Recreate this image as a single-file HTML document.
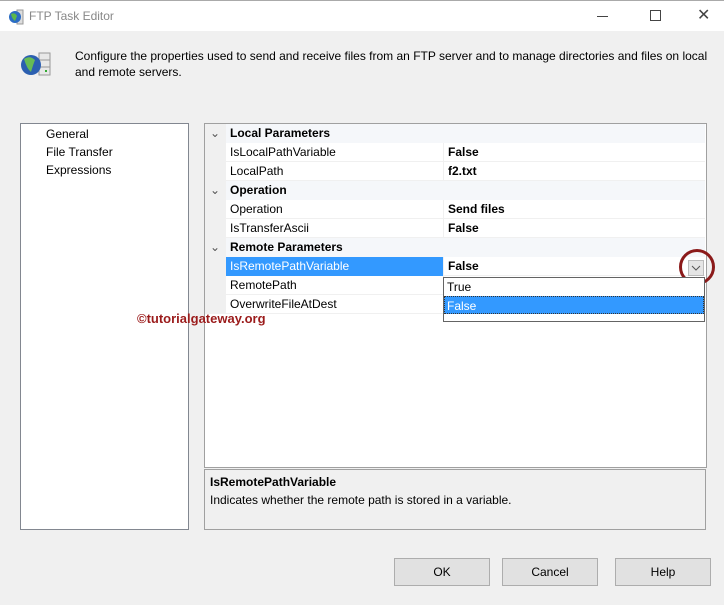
<!DOCTYPE html>
<html><head><meta charset="utf-8"><style>
*{box-sizing:border-box;margin:0;padding:0}
body{width:724px;height:605px;background:#f0f0f0;font-family:"Liberation Sans",sans-serif;font-size:12px;color:#000;position:relative;overflow:hidden}
.a{position:absolute}
.title{left:0;top:0;width:724px;height:31px;background:#fff;border-top:1px solid #aaa}
.row{position:absolute;left:205px;width:500px;height:19px;line-height:19px}
.cat{background:#f5f7fa;font-weight:bold}
.gut{position:absolute;left:0;top:0;width:21px;height:19px;background:#f0f0f0}
.nm{position:absolute;left:25px}
.vl{position:absolute;left:243px;font-weight:bold}
.prop{border-bottom:1px solid #f0f0f0}
.vsep{position:absolute;left:238px;top:0;width:1px;height:19px;background:#f0f0f0}
.btn{position:absolute;top:558px;width:96px;height:28px;background:#e1e1e1;border:1px solid #adadad;text-align:center;line-height:26px}
</style></head><body>
<div class="a title">
<svg class="a" style="left:8px;top:8px" width="17" height="16"><rect x="9" y="1" width="6" height="14" fill="#ddd" stroke="#999"/><circle cx="7" cy="8" r="6" fill="#2b6cc4"/><path d="M3 5 Q7 3 9 7 L7 12 Q4 10 3 5Z" fill="#5cb84a"/></svg>
<div class="a" style="left:29px;top:8px;color:#888;font-size:12px">FTP Task Editor</div>
<div class="a" style="left:597px;top:15px;width:11px;height:1px;background:#444"></div>
<div class="a" style="left:650px;top:9px;width:11px;height:11px;border:1px solid #444"></div>
<div class="a" style="left:697px;top:4px;font-size:16px;color:#444">✕</div>
</div>
<svg class="a" style="left:19px;top:51px" width="34" height="26"><rect x="20" y="2" width="11" height="22" fill="#e8e8e8" stroke="#999"/><line x1="20" y1="9" x2="31" y2="9" stroke="#999"/><line x1="20" y1="16" x2="31" y2="16" stroke="#999"/><rect x="26" y="19" width="2" height="2" fill="#3a3"/><circle cx="12" cy="14" r="10" fill="#2b5fb0"/><path d="M5 8 Q11 4 16 9 Q14 14 12 21 Q8 18 5 8Z" fill="#66bb55"/></svg>
<div class="a" style="left:75px;top:48px;line-height:16px;width:640px">Configure the properties used to send and receive files from an FTP server and to manage directories and files on local and remote servers.</div>

<div class="a" style="left:20px;top:123px;width:169px;height:407px;background:#fff;border:1px solid #828790"></div>
<div class="a" style="left:46px;top:127px">General</div>
<div class="a" style="left:46px;top:145px">File Transfer</div>
<div class="a" style="left:46px;top:163px">Expressions</div>

<div class="a" style="left:204px;top:123px;width:503px;height:345px;background:#fff;border:1px solid #a0a0a0"></div>

<div class="row cat" style="top:124px"><div class="gut"></div><span class="a" style="left:5px;font-weight:normal;color:#555">⌄</span><div class="nm">Local Parameters</div></div>
<div class="row prop" style="top:143px"><div class="gut"></div><div class="nm">IsLocalPathVariable</div><div class="vsep"></div><div class="vl">False</div></div>
<div class="row prop" style="top:162px"><div class="gut"></div><div class="nm">LocalPath</div><div class="vsep"></div><div class="vl">f2.txt</div></div>
<div class="row cat" style="top:181px"><div class="gut"></div><span class="a" style="left:5px;font-weight:normal;color:#555">⌄</span><div class="nm">Operation</div></div>
<div class="row prop" style="top:200px"><div class="gut"></div><div class="nm">Operation</div><div class="vsep"></div><div class="vl">Send files</div></div>
<div class="row prop" style="top:219px"><div class="gut"></div><div class="nm">IsTransferAscii</div><div class="vsep"></div><div class="vl">False</div></div>
<div class="row cat" style="top:238px"><div class="gut"></div><span class="a" style="left:5px;font-weight:normal;color:#555">⌄</span><div class="nm">Remote Parameters</div></div>
<div class="row prop" style="top:257px"><div class="gut"></div><div class="a" style="left:21px;top:0;width:218px;height:19px;background:#3399ff"></div><div class="nm" style="color:#fff">IsRemotePathVariable</div><div class="vsep"></div><div class="vl">False</div></div>
<div class="row prop" style="top:276px"><div class="gut"></div><div class="nm">RemotePath</div><div class="vsep"></div></div>
<div class="row prop" style="top:295px"><div class="gut"></div><div class="nm">OverwriteFileAtDest</div><div class="vsep"></div></div>

<div class="a" style="left:688px;top:260px;width:16px;height:16px;background:#e5e5e5;border:1px solid #bbb"></div>
<svg class="a" style="left:690px;top:264px" width="12" height="8"><path d="M2 2 L6 6 L10 2" fill="none" stroke="#555"/></svg>
<div class="a" style="left:679px;top:249px;width:36px;height:36px;border:3px solid #8b1a1a;border-radius:50%"></div>

<div class="a" style="left:443px;top:277px;width:262px;height:45px;background:#fff;border:1px solid #646464"></div>
<div class="a" style="left:447px;top:280px">True</div>
<div class="a" style="left:444px;top:296px;width:260px;height:18px;background:#3399ff;border:1px dotted #333"></div>
<div class="a" style="left:447px;top:299px;color:#fff">False</div>

<div class="a" style="left:137px;top:311px;color:#9b1b1b;font-weight:bold;font-size:13px">©tutorialgateway.org</div>

<div class="a" style="left:204px;top:469px;width:502px;height:61px;border:1px solid #a0a0a0"></div>
<div class="a" style="left:210px;top:475px;font-weight:bold">IsRemotePathVariable</div>
<div class="a" style="left:210px;top:493px">Indicates whether the remote path is stored in a variable.</div>

<div class="btn" style="left:394px">OK</div>
<div class="btn" style="left:502px">Cancel</div>
<div class="btn" style="left:615px">Help</div>
</body></html>
